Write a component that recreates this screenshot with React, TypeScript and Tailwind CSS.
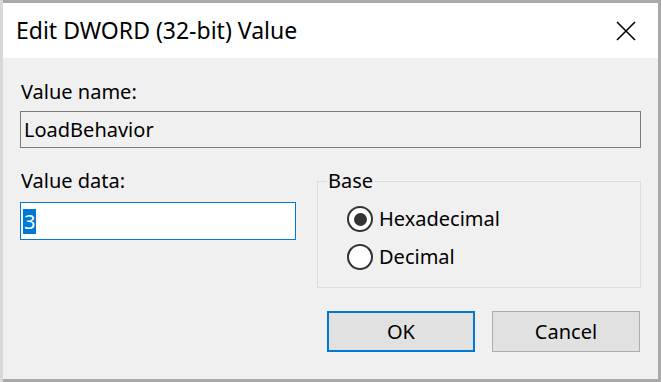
import React from 'react';

const font = { fontFamily: '"Noto Sans", "Liberation Sans", sans-serif' };

const Radio: React.FC<{ label: string; checked?: boolean }> = ({ label, checked }) => (
  <label className="flex items-center h-[26px] gap-[6px]">
    <span className="w-[26px] h-[26px] rounded-full border-2 border-[#333333] bg-white flex items-center justify-center">
      {checked && <span className="w-[13px] h-[13px] rounded-full bg-[#333333]" />}
    </span>
    <span className="text-[20px] text-black leading-none">{label}</span>
  </label>
);

export default function App() {
  return (
    <div className="w-[661px] h-[382px] bg-[#a9a9a9] flex overflow-hidden" style={font}>
      {/* sliver of the desktop behind the window */}
      <div className="w-[3px] h-full bg-[#d8d8d8]" />
      <div className="pt-[3px] pb-[3px] pr-[3px] flex-1 flex">
        <div className="flex-1 flex flex-col bg-[#f0f0f0]">
          {/* Title bar */}
          <div className="h-[55px] bg-white flex items-center justify-between pl-[13px] pr-[22px]">
            <span className="text-[23px] text-black leading-none">Edit DWORD (32-bit) Value</span>
            <svg width="20" height="20" viewBox="0 0 20 20" className="text-black">
              <path d="M1 1 L19 19 M19 1 L1 19" stroke="currentColor" strokeWidth="1.6" fill="none" />
            </svg>
          </div>

          {/* Body */}
          <div className="flex-1 px-[17px] pt-[23px] flex flex-col">
            <div className="text-[20px] leading-[22px] text-black pl-[1px]">Value name:</div>
            <div className="mt-[8px] h-[37px] w-[621px] border border-[#7a7a7a] bg-[#f0f0f0] flex items-center pl-[3px] text-[20px] text-black">
              LoadBehavior
            </div>

            <div className="mt-[22px] flex">
              <div className="w-[276px]">
                <div className="text-[20px] leading-[22px] text-black pl-[1px]">Value data:</div>
                <div className="mt-[10px] h-[38px] w-[276px] border border-[#0078d7] bg-white flex items-center pl-[2px]">
                  <span className="bg-[#0078d7] text-white text-[20px] leading-[25px] px-[1px]">3</span>
                </div>
              </div>

              <fieldset className="ml-[21px] w-[324px] h-[118px] border border-[#dcdcdc] pl-[29px] pr-2 pb-2 flex flex-col">
                <legend className="text-[20px] text-black leading-[22px] px-[1px] ml-[-20px]">Base</legend>
                <div className="mt-[14px] flex flex-col gap-[12px]">
                  <Radio label="Hexadecimal" checked />
                  <Radio label="Decimal" />
                </div>
              </fieldset>
            </div>

            <div className="mt-[23px] flex justify-end gap-[17px] pr-[1px]">
              <button className="w-[148px] h-[41px] bg-[#e1e1e1] border-2 border-[#0078d7] text-[20px] text-black">
                OK
              </button>
              <button className="w-[148px] h-[41px] bg-[#e1e1e1] border border-[#adadad] text-[20px] text-black">
                Cancel
              </button>
            </div>
          </div>
        </div>
      </div>
    </div>
  );
}
